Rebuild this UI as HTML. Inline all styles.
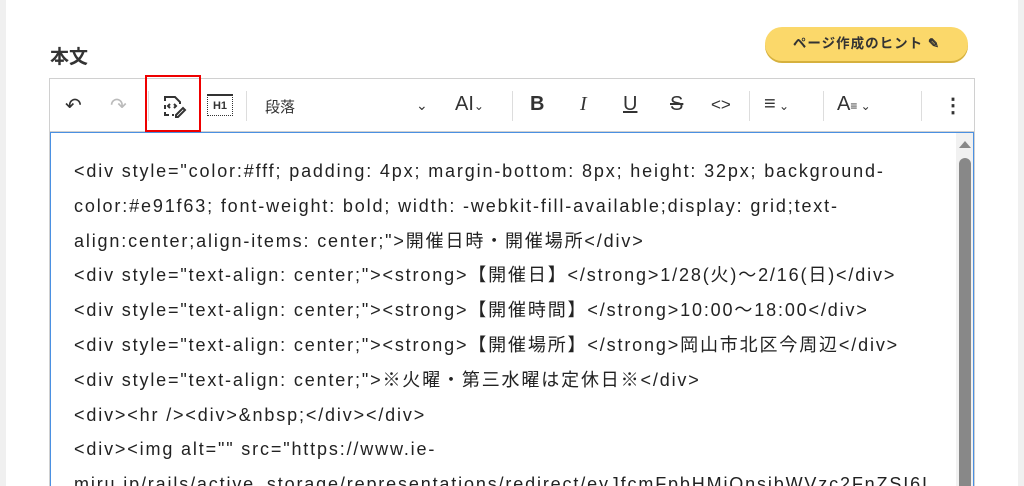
<!DOCTYPE html>
<html><head><meta charset="utf-8"><style>
html,body{margin:0;width:1024px;height:486px;overflow:hidden}
body{background:#fff;font-family:"Liberation Sans","Noto Sans CJK JP",sans-serif;position:relative}
.l{position:absolute;left:0;top:0;width:6px;height:486px;background:#f0f0f0}
.r{position:absolute;right:0;top:0;width:6px;height:486px;background:#f0f0f0}
.title{position:absolute;left:50px;top:42px;font-size:19px;font-weight:bold;color:#333}
.hint{position:absolute;left:765px;top:27px;width:203px;height:34px;border-radius:17px;background:#fbd86a;box-shadow:0 2px 0 #d6b13e;font-size:13.5px;letter-spacing:1px;font-weight:bold;color:#333;text-align:center;line-height:34px}
.ed{position:absolute;left:49px;top:78px;width:924px;height:407px;border:1px solid #d0d0d0;border-bottom:none;overflow:hidden}
.tb{position:absolute;left:0;top:0;width:924px;height:52px;border-bottom:1px solid #d0d0d0;color:#333}
.tb span{position:absolute;top:14px;font-size:20px}
.sep{position:absolute;top:12px;width:1px;height:30px;background:#ddd}
.ct{position:absolute;left:0;top:53px;width:922px;height:360px;border:1px solid #4a90e2;border-bottom:none;overflow:hidden}
.tx{position:absolute;left:23px;top:21px;width:840px;font-size:18px;letter-spacing:1.85px;line-height:34.8px;color:#222}
.sb{position:absolute;left:905px;top:0;width:18px;height:380px;background:#f1f1f1}
.th{position:absolute;left:3px;top:25px;width:12px;height:360px;background:#888;border-radius:6px}
.red{position:absolute;left:145px;top:75px;width:56px;height:57px;border:2px solid #e00;box-sizing:border-box}
</style></head><body>
<div class="l"></div><div class="r"></div>
<div class="title">本文</div>
<div class="hint">ページ作成のヒント ✎</div>
<div class="ed">
<div class="tb">
<span style="left:15px">↶</span><span style="left:60px;color:#bbb">↷</span>
<div class="sep" style="left:98px"></div>
<svg style="position:absolute;left:111px;top:14px" width="26" height="26" viewBox="0 0 26 26" fill="none" stroke="#333" stroke-width="2"><path d="M4 8V4h10l5 5v2M4 12v4M4 19v3h4M11 22h2"/><path d="M9 11l-2 2 2 2M13 11l2 2-2 2"/><path d="M15 22l7-7 2 2-7 7h-2z"/></svg>
<div style="position:absolute;left:157px;top:15px;width:26px;height:22px;border:1px dotted #333;border-top:2px solid #333;font-size:11px;font-weight:bold;text-align:center;line-height:20px;box-sizing:border-box">H1</div>
<div class="sep" style="left:196px"></div>
<span style="left:215px;font-size:15px;top:17px">段落</span>
<span style="left:366px;font-size:14px;top:18px">⌄</span>
<span style="left:405px">AI<small style="font-size:12px">⌄</small></span>
<div class="sep" style="left:462px"></div>
<span style="left:480px;font-weight:bold">B</span>
<span style="left:530px;font-style:italic;font-family:'Liberation Serif'">I</span>
<span style="left:573px;text-decoration:underline">U</span>
<span style="left:620px;text-decoration:line-through">S</span>
<span style="left:661px;font-size:17px;top:16px">&lt;&gt;</span>
<div class="sep" style="left:699px"></div>
<span style="left:714px">≡<small style="font-size:12px"> ⌄</small></span>
<div class="sep" style="left:773px"></div>
<span style="left:787px">A<small style="font-size:12px">≡ ⌄</small></span>
<div class="sep" style="left:871px"></div>
<span style="left:893px;font-weight:bold">⋮</span>
</div>
<div class="ct">
<div class="tx">&lt;div style="color:#fff; padding: 4px; margin-bottom: 8px; height: 32px; background-color:#e91f63; font-weight: bold; width: -webkit-fill-available;display: grid;text-align:center;align-items: center;"&gt;開催日時・開催場所&lt;/div&gt;<br>&lt;div style="text-align: center;"&gt;&lt;strong&gt;【開催日】&lt;/strong&gt;1/28(火)〜2/16(日)&lt;/div&gt;<br>&lt;div style="text-align: center;"&gt;&lt;strong&gt;【開催時間】&lt;/strong&gt;10:00〜18:00&lt;/div&gt;<br>&lt;div style="text-align: center;"&gt;&lt;strong&gt;【開催場所】&lt;/strong&gt;岡山市北区今周辺&lt;/div&gt;<br>&lt;div style="text-align: center;"&gt;※火曜・第三水曜は定休日※&lt;/div&gt;<br>&lt;div&gt;&lt;hr /&gt;&lt;div&gt;&amp;nbsp;&lt;/div&gt;&lt;/div&gt;<br>&lt;div&gt;&lt;img alt="" src="https://www.ie-<br><span style="white-space:nowrap">miru.jp/rails/active_storage/representations/redirect/eyJfcmFpbHMiOnsibWVzc2FnZSI6I</span></div>
<div class="sb"><div style="position:absolute;left:3px;top:8px;border:6px solid transparent;border-bottom:7px solid #888;border-top:0"></div><div class="th"></div></div>
</div>
</div>
<div class="red"></div>
</body></html>
